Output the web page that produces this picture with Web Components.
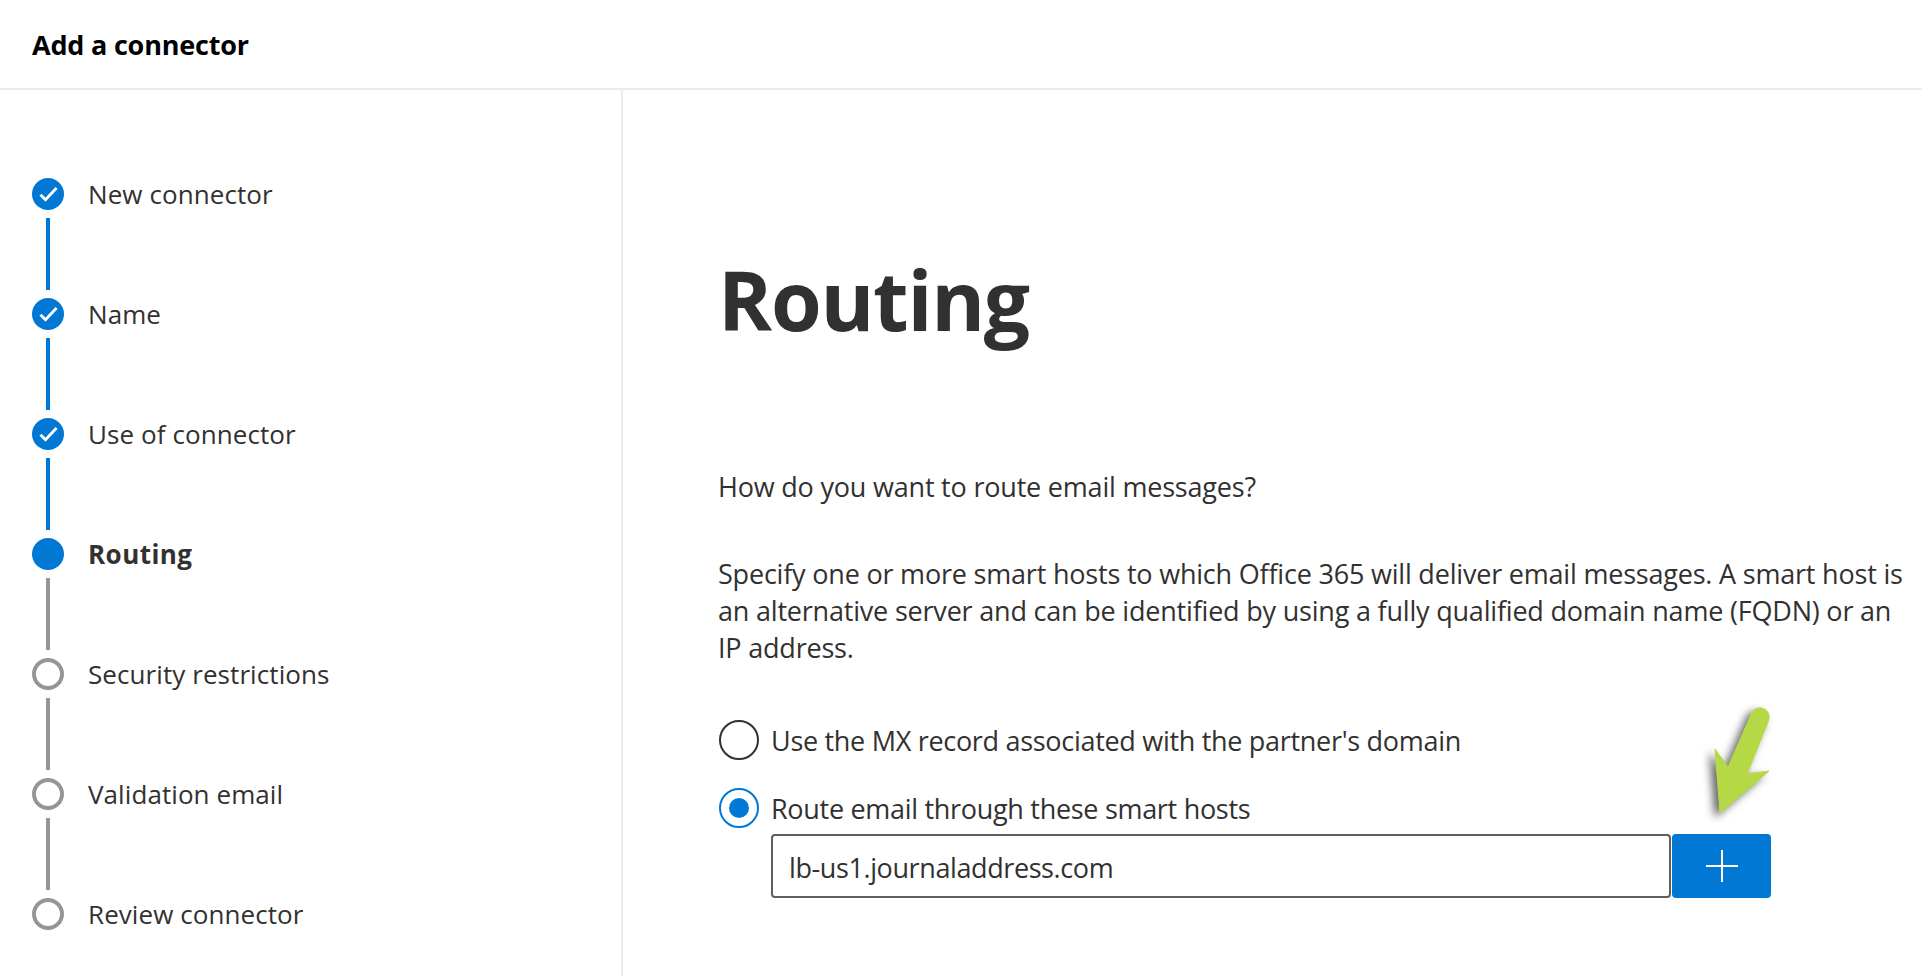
<!DOCTYPE html>
<html lang="en">
<head>
<meta charset="utf-8">
<title>Add a connector</title>
<style>
    html, body { margin: 0; height: 100%; background: #fff; overflow: hidden; }
    body { font-family: "Open Sans", "Noto Sans", sans-serif; color: #323130; }
</style>
</head>
<body>
<connector-wizard>
    <wizard-step slot="steps" state="done" label="New connector"></wizard-step>
    <wizard-step slot="steps" state="done" label="Name"></wizard-step>
    <wizard-step slot="steps" state="done" label="Use of connector"></wizard-step>
    <wizard-step slot="steps" state="current" label="Routing"></wizard-step>
    <wizard-step slot="steps" state="todo" label="Security restrictions"></wizard-step>
    <wizard-step slot="steps" state="todo" label="Validation email"></wizard-step>
    <wizard-step slot="steps" state="todo" label="Review connector" last></wizard-step>
    <routing-page></routing-page>
</connector-wizard>

<script>
'use strict'

// Page frame: title bar on top, steps on the left, content on the right
class ConnectorWizard extends HTMLElement {
    constructor() {
        super();
        this.attachShadow({ mode: 'open' });
    }

    connectedCallback() {
        this.shadowRoot.innerHTML = `
        <style>
            :host { display: flex; flex-direction: column; height: 976px; }
            .title {
                height: 87px;
                flex: none;
                display: flex;
                align-items: center;
                padding: 1px 0 0 32px;
                border-bottom: 2px solid #edebe9;
                font-size: 27px;
                font-weight: 700;
                letter-spacing: -0.2px;
                color: #000;
            }
            .body { flex: 1; display: flex; min-height: 0; }
            .steps {
                width: 621px;
                flex: none;
                box-sizing: content-box;
                padding-top: 88px;
                border-right: 2px solid #edebe9;
            }
            .content { flex: 1; min-width: 0; }
        </style>
        <header class="title">Add a connector</header>
        <div class="body">
            <nav class="steps"><slot name="steps"></slot></nav>
            <main class="content"><slot></slot></main>
        </div>`;
    }
}

// One step of the left list, with the line that goes down to the next step
class WizardStep extends HTMLElement {
    constructor() {
        super();
        this.attachShadow({ mode: 'open' });
    }

    connectedCallback() {
        const state = this.getAttribute('state');
        const check = state === 'done'
            ? '<svg width="32" height="32" viewBox="0 0 32 32"><path d="M8.5 16.8l5 5L24.5 10" fill="none" stroke="#fff" stroke-width="2.8"/></svg>'
            : '';
        const line = this.hasAttribute('last') ? '' : '<div class="line"></div>';
        this.shadowRoot.innerHTML = `
        <style>
            :host { display: block; padding-left: 32px; }
            .row { display: flex; align-items: center; height: 32px; gap: 24px; }
            .dot {
                width: 32px;
                height: 32px;
                flex: none;
                box-sizing: border-box;
                border-radius: 50%;
                background: #0078d4;
            }
            .dot svg { display: block; }
            .label {
                font-size: 26px;
                letter-spacing: 0.08px;
                color: #323130;
                white-space: nowrap;
            }
            .line {
                width: 4px;
                height: 72px;
                margin: 8px 0 8px 14px;
                background: #0078d4;
            }
            :host([state="current"]) .label { font-weight: 700; letter-spacing: 0.45px; }
            :host([state="current"]) .line,
            :host([state="todo"]) .line { background: #979593; }
            :host([state="todo"]) .dot { background: #fff; border: 4px solid #979593; }
        </style>
        <div class="row"><span class="dot">${check}</span><span class="label">${this.getAttribute('label')}</span></div>
        ${line}`;
    }
}

// Radio button with its text, the text can be followed by slotted content
class RadioOption extends HTMLElement {
    constructor() {
        super();
        this.attachShadow({ mode: 'open' });
    }

    connectedCallback() {
        this.shadowRoot.innerHTML = `
        <style>
            :host { display: flex; align-items: center; height: 40px; gap: 12px; margin-left: 1px; }
            .ring {
                width: 40px;
                height: 40px;
                flex: none;
                box-sizing: border-box;
                border: 2px solid #323130;
                border-radius: 50%;
                display: flex;
                align-items: center;
                justify-content: center;
            }
            :host([checked]) .ring { border-color: #0078d4; }
            :host([checked]) .ring::after {
                content: "";
                width: 20px;
                height: 20px;
                border-radius: 50%;
                background: #0078d4;
            }
            .text { font-size: 27px; letter-spacing: -0.3px; color: #323130; white-space: nowrap; }
        </style>
        <span class="ring"></span><span class="text"><slot></slot></span>`;
    }
}

// Text box and blue add button
class HostInput extends HTMLElement {
    constructor() {
        super();
        this.attachShadow({ mode: 'open' });
    }

    connectedCallback() {
        this.shadowRoot.innerHTML = `
        <style>
            :host { display: flex; height: 64px; }
            .box {
                width: 900px;
                flex: none;
                box-sizing: border-box;
                border: 2px solid #605e5c;
                border-radius: 4px;
                padding: 2px 0 0 16px;
                display: flex;
                align-items: center;
                font-size: 27px;
                letter-spacing: -0.4px;
                color: #323130;
            }
            .add {
                width: 99px;
                flex: none;
                margin-left: 1px;
                border: 0;
                padding: 0;
                border-radius: 4px;
                background: #0078d4;
                display: flex;
                align-items: center;
                justify-content: center;
            }
            .add svg { display: block; }
        </style>
        <div class="box"><slot></slot></div>
        <button class="add" title="Add"><svg width="32" height="32" viewBox="0 0 32 32"><path d="M0 16h32M16 0v32" stroke="#fff" stroke-width="2"/></svg></button>`;
    }
}

// Green arrow painted on top of the screenshot
class CalloutArrow extends HTMLElement {
    constructor() {
        super();
        this.attachShadow({ mode: 'open' });
    }

    connectedCallback() {
        this.shadowRoot.innerHTML = `
        <style>
            :host { position: absolute; left: 1690px; top: 695px; display: block; width: 110px; height: 140px; }
            svg { display: block; filter: drop-shadow(-5px 4px 4px rgba(0,0,0,.6)); }
        </style>
        <svg width="110" height="140" viewBox="1690 695 110 140">
            <path d="M1751.5 713.5a9 9 0 0 1 17 7L1747 774l22-3-49 42-5-64 13 18z" fill="#b5d945" stroke="#b5d945" stroke-width="1" stroke-linejoin="round"/>
        </svg>`;
    }
}

// Content of the Routing step
class RoutingPage extends HTMLElement {
    constructor() {
        super();
        this.attachShadow({ mode: 'open' });
    }

    connectedCallback() {
        this.shadowRoot.innerHTML = `
        <style>
            :host { display: block; padding-left: 95px; font-size: 27px; color: #323130; }
            h1 {
                margin: 0;
                padding-top: 149px;
                height: 120px;
                line-height: 120px;
                font-size: 82px;
                font-weight: 700;
                letter-spacing: -1.25px;
            }
            p { margin: 0; line-height: 37px; letter-spacing: -0.2px; white-space: nowrap; }
            .question { margin-top: 109px; }
            .detail { margin-top: 50px; }
            .options { margin-top: 54px; }
            .options radio-option + radio-option { margin-top: 28px; }
            host-input { margin: 6px 0 0 53px; }
        </style>
        <h1>Routing</h1>
        <p class="question">How do you want to route email messages?</p>
        <p class="detail">Specify one or more smart hosts to which Office 365 will deliver email messages. A smart host is<br>an alternative server and can be identified by using a fully qualified domain name (FQDN) or an<br>IP address.</p>
        <div class="options">
            <radio-option>Use the MX record associated with the partner's domain</radio-option>
            <radio-option checked>Route email through these smart hosts</radio-option>
            <host-input>lb-us1.journaladdress.com</host-input>
        </div>
        <callout-arrow></callout-arrow>`;
    }
}

customElements.define('connector-wizard', ConnectorWizard);
customElements.define('wizard-step', WizardStep);
customElements.define('radio-option', RadioOption);
customElements.define('host-input', HostInput);
customElements.define('callout-arrow', CalloutArrow);
customElements.define('routing-page', RoutingPage);
</script>
</body>
</html>
